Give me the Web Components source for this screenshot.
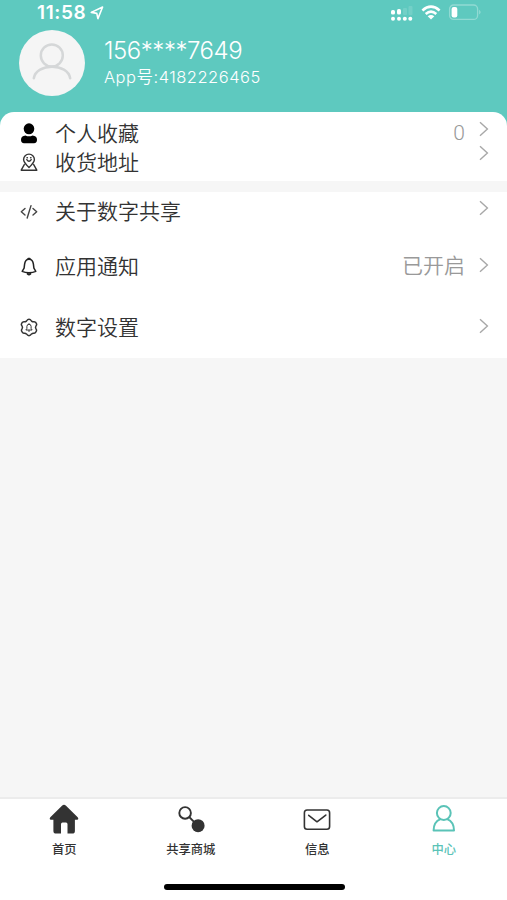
<!DOCTYPE html>
<html lang="zh-CN">
<head>
<meta charset="UTF-8">
<meta name="viewport" content="width=device-width, initial-scale=1.0">
<title>中心</title>
<style>
    html, body {
        margin: 0;
        height: 100%;
        background: #f6f6f6;
    }

    body {
        font-family: Inter, "Noto Sans CJK SC", sans-serif;
        color: #333333;
        overflow: hidden;
    }
</style>
</head>
<body>
<center-page>
    <status-bar slot="header" time="11:58"></status-bar>
    <user-profile slot="header" name="156****7649" account="App号:4182226465"></user-profile>
    <cell-group class="first">
        <cell-item icon="user" label="个人收藏" value="0" style="--cell-height: 29px; --arrow-lift: 9px"></cell-item>
        <cell-item icon="address" label="收货地址" style="--cell-height: 29px; --arrow-lift: 19px"></cell-item>
    </cell-group>
    <cell-group>
        <cell-item icon="code" label="关于数字共享" style="--cell-height: 39px; --arrow-lift: 8px"></cell-item>
        <cell-item icon="bell" label="应用通知" value="已开启" style="--cell-height: 71px; --arrow-lift: 3px"></cell-item>
        <cell-item icon="setting" label="数字设置" style="--cell-height: 51px; --arrow-lift: 3px"></cell-item>
    </cell-group>
    <tab-bar slot="footer" value="center">
        <tab-item icon="home" label="首页"></tab-item>
        <tab-item icon="share" label="共享商城"></tab-item>
        <tab-item icon="mail" label="信息"></tab-item>
        <tab-item icon="center" label="中心" active></tab-item>
    </tab-bar>
</center-page>

<script>
(function () {
    // 图标集合：[宽, 高, 内容]
    const icons = {
        user: [18, 22, '<g fill="#000"><ellipse cx="9" cy="5.8" rx="5.3" ry="5.5"/><path d="M5.5 12.4Q9 14.2 12.5 12.4Q17 12.8 17 16.8Q17 20.2 14 20.2H4Q1 20.2 1 16.8Q1 12.8 5.5 12.4Z"/></g>'],
        address: [18, 20, '<g fill="none" stroke="#333" stroke-width="1.4" stroke-linejoin="round" stroke-linecap="round"><path d="M9 14.6C6 11.6 3.6 9.2 3.6 6.5a5.4 5.4 0 0 1 10.8 0C14.4 9.2 12 11.6 9 14.6Z"/><path d="M4.3 11.6L1.2 17.2H16.8L13.7 11.6"/><path d="M6.8 6.7Q9 9.9 11.2 6.7M7 4.8h.4M10.6 4.8h.4"/></g>'],
        code: [18, 16, '<g fill="none" stroke="#444" stroke-width="1.4" stroke-linejoin="round" stroke-linecap="round"><path d="M5 4.4L1.3 7.8L5 11M13 4.4L16.7 7.8L13 11M11 1.6L7.2 14"/></g>'],
        bell: [18, 20, '<g fill="none" stroke="#222" stroke-width="1.5" stroke-linejoin="round" stroke-linecap="round"><path d="M9 2.2C5.9 2.2 4.9 4.5 4.6 7.1L4.1 11.2L2.2 14.4Q5 15.8 9 15.8T15.8 14.4L13.9 11.2L13.4 7.1C13.1 4.5 12.1 2.2 9 2.2Z"/><path d="M8.3 1.6H9.7M7.6 16.8Q9 18 10.4 16.8" stroke-width="1.9"/></g>'],
        setting: [18, 20, '<g fill="none" stroke="#333" stroke-width="1.5" stroke-linejoin="round" stroke-linecap="round"><path d="M9 1.3Q10.3 1.3 11.6 3.1Q12.5 4 14.2 3.8Q16 3.8 16.7 6.2Q16.8 7 15.9 8.1Q15.1 9.4 15.9 10.7Q17 12 16.4 13.1Q15.6 15.2 14.2 15.2Q12.5 14.9 11.6 15.9Q10.4 17.7 9 17.7Q7.6 17.7 6.4 15.9Q5.5 14.9 3.8 15.2Q2.4 15.2 1.6 13.1Q1 12 2.1 10.7Q2.9 9.4 2.1 8.1Q1.2 7 1.3 6.2Q2 3.8 3.8 3.8Q5.5 4 6.4 3.1Q7.7 1.3 9 1.3Z"/><path d="M9 6.1Q6.9 6.2 6.9 8.4V10.4L5.9 12H12.1L11.1 10.4V8.4Q11.1 6.2 9 6.1ZM8.5 13H9.5" stroke-width="1"/></g>'],
        arrow: [10, 16, '<path d="M1 1.2L8.4 8L1 14.8" fill="none" stroke="#a8a8a8" stroke-width="1.4"/>'],
        avatar: [66, 66, '<circle cx="33" cy="33" r="33" fill="#f5f5f5"/><g fill="none" stroke="#d5d7d8" stroke-width="2.5" stroke-linecap="round"><circle cx="32.8" cy="25.5" r="11"/><path d="M14.8 48.3C17 32.8 49 32.8 51.2 48.3"/></g>'],
        location: [14, 14, '<path d="M1.3 6.4L12.6 1L7.9 12.6L6.8 7.4Z" fill="none" stroke="#fff" stroke-width="1.6" stroke-linejoin="round"/>'],
        signal: [24, 16, '<g fill="#fff"><rect x="1" y="5" width="4" height="4.5" rx="1.6"/><rect x="7" y="4" width="4" height="5.5" rx="1.6"/><circle cx="3" cy="13.7" r="2"/><circle cx="9" cy="13.7" r="2"/><circle cx="14.8" cy="13.7" r="2"/><circle cx="20.3" cy="13.7" r="2"/><g opacity=".13"><rect x="13" y="3" width="4" height="7" rx="1"/><rect x="18.5" y="1" width="4" height="9" rx="1"/></g></g>'],
        wifi: [20, 16, '<g fill="none" stroke="#fff" stroke-width="2.6"><path d="M1.4 5.4Q10 -2.1 18.6 5.4"/><path d="M4.7 8.9Q10 4.4 15.3 8.9"/></g><path d="M6.7 11.2Q10 8.7 13.3 11.2L10 14.6Z" fill="#fff"/>'],
        battery: [34, 18, '<rect x="1.6" y="1" width="28" height="14.4" rx="4" fill="none" stroke="#fff" stroke-opacity=".32" stroke-width="1.3"/><rect x="3.6" y="2.9" width="5.7" height="10.6" rx="2" fill="#fff"/><path d="M31.2 5.8Q34 8.2 31.2 10.6Z" fill="#fff" fill-opacity=".36"/>'],
        home: [30, 30, '<path d="M15 .8Q16 .8 17 1.7L28.7 13.2Q30.2 15.6 28 15.8H25.9V27Q25.9 29.6 23.2 29.6H18.5V20.2Q18.5 18.4 17 18.4H13.5Q12 18.4 12 20.2V29.6H7.2Q4.4 29.6 4.4 27V15.8H2Q-.2 15.6 1.3 13.2L13 1.7Q14 .8 15 .8Z" fill="#333"/>'],
        share: [28, 30, '<g fill="none" stroke="#333" stroke-width="1.9"><circle cx="8.1" cy="8.9" r="5.8"/><path d="M12.2 13L17.5 18.3"/></g><circle cx="21.1" cy="21.7" r="6.5" fill="#333"/>'],
        mail: [28, 30, '<g fill="none" stroke="#333" stroke-width="1.6" stroke-linejoin="round" stroke-linecap="round"><rect x="1.4" y="6" width="25.2" height="19.3" rx="2.7"/><path d="M5.7 11.3L14 17.8L22.8 11.1"/></g>'],
        center: [24, 30, '<g fill="none" stroke="#5ac3b7" stroke-width="2" stroke-linejoin="round"><circle cx="11.8" cy="9" r="6.9"/><path d="M8.5 15.1C4 16.8 1.6 20.6 1.6 26.6H22C22 20.6 19.6 16.8 15.1 15.1"/></g>']
    };

    function icon(name) {
        const [width, height, body] = icons[name];
        return `<svg width="${width}" height="${height}" viewBox="0 0 ${width} ${height}" aria-hidden="true">${body}</svg>`;
    }

    class BaseElement extends HTMLElement {
        constructor() {
            super();
            this.attachShadow({ mode: 'open' });
        }

        connectedCallback() {
            this.shadowRoot.innerHTML = this.template();
        }

        attr(name) {
            return this.getAttribute(name) || '';
        }
    }

    class CenterPage extends BaseElement {
        template() {
            return `
                <style>
                    :host {
                        display: flex;
                        flex-direction: column;
                        height: 100vh;
                        background: #f6f6f6;
                    }

                    header {
                        height: 126px;
                        margin-bottom: -14px;
                        background: #5ec9bf;
                        flex: none;
                    }

                    main {
                        flex: 1;
                        display: flex;
                        flex-direction: column;
                        gap: 11px;
                    }
                </style>
                <header><slot name="header"></slot></header>
                <main><slot></slot></main>
                <slot name="footer"></slot>
            `;
        }
    }

    class StatusBar extends BaseElement {
        template() {
            return `
                <style>
                    :host {
                        display: flex;
                        align-items: center;
                        box-sizing: border-box;
                        height: 25px;
                        padding: 0 25px 0 37px;
                        color: #ffffff;
                    }

                    svg { display: block; }

                    .time {
                        font-size: 19px;
                        font-weight: 600;
                        letter-spacing: 0.6px;
                        margin-right: 4px;
                    }

                    .right {
                        display: flex;
                        align-items: center;
                        gap: 7px;
                        margin-left: auto;
                    }
                </style>
                <span class="time">${this.attr('time')}</span>${icon('location')}
                <div class="right">${icon('signal')}${icon('wifi')}${icon('battery')}</div>
            `;
        }
    }

    class UserProfile extends BaseElement {
        template() {
            return `
                <style>
                    :host {
                        display: flex;
                        gap: 19px;
                        padding: 5px 19px 0;
                        color: #ffffff;
                    }

                    svg { display: block; }

                    .info { padding-top: 6px; }

                    .name {
                        font-size: 24px;
                        line-height: 30px;
                        font-weight: 350;
                        letter-spacing: -0.45px;
                    }

                    .account {
                        font-size: 16.5px;
                        line-height: 23px;
                        font-weight: 350;
                        letter-spacing: 0.5px;
                    }
                </style>
                ${icon('avatar')}
                <div class="info">
                    <div class="name">${this.attr('name')}</div>
                    <div class="account">${this.attr('account')}</div>
                </div>
            `;
        }
    }

    class CellGroup extends BaseElement {
        template() {
            return `
                <style>
                    :host {
                        display: block;
                        padding-bottom: 5px;
                        background: #ffffff;
                    }

                    :host(.first) {
                        padding: 7px 0 4px;
                        border-radius: 14px 14px 0 0;
                    }
                </style>
                <slot></slot>
            `;
        }
    }

    class CellItem extends BaseElement {
        template() {
            return `
                <style>
                    :host {
                        display: flex;
                        align-items: center;
                        height: var(--cell-height);
                        padding: 0 18px 0 20px;
                        font-size: 21px;
                        line-height: 29px;
                        font-weight: 350;
                    }

                    svg { display: block; }

                    .label {
                        flex: 1;
                        margin-left: 17px;
                    }

                    .value {
                        margin-right: 14px;
                        font-family: Roboto, "Noto Sans CJK SC", sans-serif;
                        color: #999999;
                    }

                    .arrow { margin-bottom: var(--arrow-lift); }
                </style>
                ${icon(this.attr('icon'))}
                <span class="label">${this.attr('label')}</span>
                <span class="value">${this.attr('value')}</span>
                <span class="arrow">${icon('arrow')}</span>
            `;
        }
    }

    class TabBar extends BaseElement {
        template() {
            return `
                <style>
                    :host {
                        display: flex;
                        flex-direction: column;
                        align-items: center;
                        box-sizing: border-box;
                        height: 103px;
                        border-top: 2px solid #ececec;
                        background: #ffffff;
                    }

                    nav {
                        display: grid;
                        grid-template-columns: repeat(4, 1fr);
                        box-sizing: border-box;
                        width: 100%;
                        height: 85px;
                        padding-left: 1px;
                    }

                    .indicator {
                        width: 181px;
                        height: 6px;
                        margin-left: 1px;
                        border-radius: 3px;
                        background: #000000;
                    }
                </style>
                <nav><slot></slot></nav>
                <div class="indicator"></div>
            `;
        }
    }

    class TabItem extends BaseElement {
        template() {
            return `
                <style>
                    :host {
                        display: flex;
                        flex-direction: column;
                        align-items: center;
                        gap: 7px;
                        padding-top: 5px;
                        font-size: 12.3px;
                        line-height: 18px;
                        font-weight: 500;
                    }

                    :host([active]) { color: #5ac3b7; }

                    svg { display: block; }
                </style>
                ${icon(this.attr('icon'))}
                <span>${this.attr('label')}</span>
            `;
        }
    }

    customElements.define('center-page', CenterPage);
    customElements.define('status-bar', StatusBar);
    customElements.define('user-profile', UserProfile);
    customElements.define('cell-group', CellGroup);
    customElements.define('cell-item', CellItem);
    customElements.define('tab-bar', TabBar);
    customElements.define('tab-item', TabItem);
}());
</script>
</body>
</html>
